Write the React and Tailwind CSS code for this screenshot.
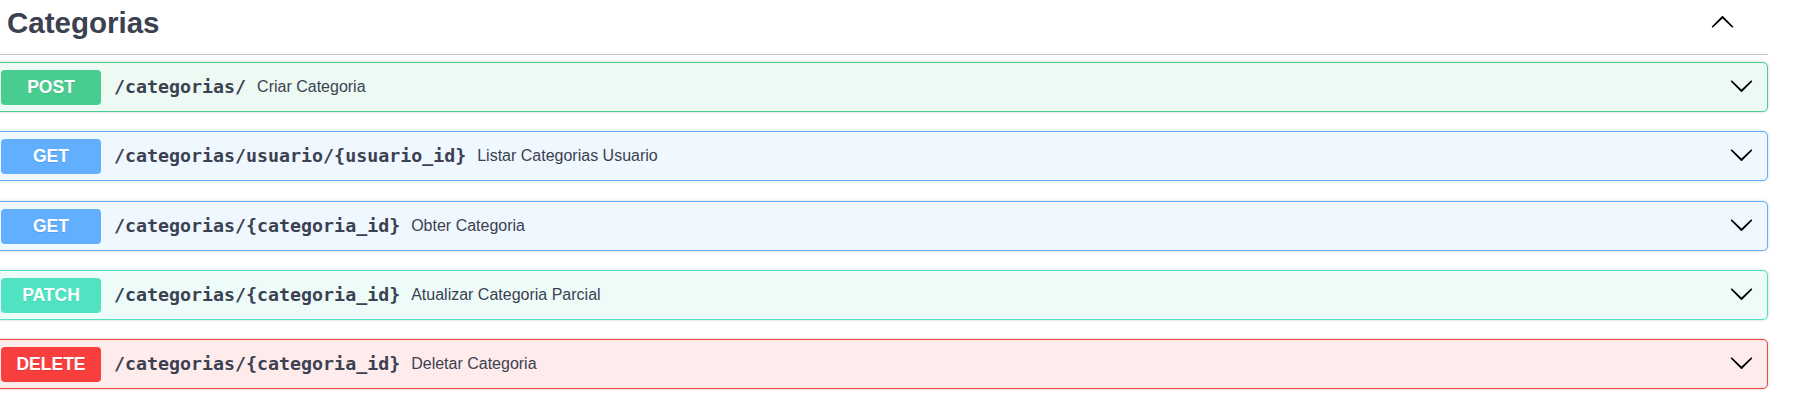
const OPS = [
  { method: "POST", path: "/categorias/", summary: "Criar Categoria" },
  { method: "GET", path: "/categorias/usuario/{usuario_id}", summary: "Listar Categorias Usuario" },
  { method: "GET", path: "/categorias/{categoria_id}", summary: "Obter Categoria" },
  { method: "PATCH", path: "/categorias/{categoria_id}", summary: "Atualizar Categoria Parcial" },
  { method: "DELETE", path: "/categorias/{categoria_id}", summary: "Deletar Categoria" },
];

const METHOD_STYLE = {
  POST: { block: "bg-[#edfaf4] border-[#49cc90]", badge: "bg-[#49cc90]" },
  GET: { block: "bg-[#eff7ff] border-[#61affe]", badge: "bg-[#61affe]" },
  PATCH: { block: "bg-[#edfcf9] border-[#50e3c2]", badge: "bg-[#50e3c2]" },
  DELETE: { block: "bg-[#feebeb] border-[#f93e3e]", badge: "bg-[#f93e3e]" },
};

function Chevron({ up }) {
  return (
    <svg
      width="25"
      height="25"
      viewBox="0 0 20 20"
      className={up ? "rotate-180" : ""}
      aria-hidden="true"
    >
      <path
        fill="#000"
        d="M17.418 6.109c.272-.268.709-.268.979 0s.271.701 0 .969l-7.908 7.83c-.27.268-.707.268-.979 0l-7.908-7.83c-.27-.268-.27-.701 0-.969.271-.268.709-.268.979 0L10 13.25l7.418-7.141z"
      />
    </svg>
  );
}

function Operation({ op, wide }) {
  const s = METHOD_STYLE[op.method];
  return (
    <div
      className={`-ml-[6px] h-[50px] flex items-center border rounded-[5px] pl-[6px] shadow-[0_0_3px_rgba(0,0,0,0.19)] ${wide ? "mb-[20px]" : "mb-[19px]"} ${s.block}`}
    >
      <span
        className={`w-[100px] h-[35px] rounded-[4px] flex items-center justify-center text-white font-bold text-[17.5px] [text-shadow:0_1px_0_rgba(0,0,0,0.1)] ${s.badge}`}
      >
        {op.method}
      </span>
      <span className="ml-[13px] font-['DejaVu_Sans_Mono',monospace] font-bold text-[18.3px] text-[#3b4151]">
        {op.path}
      </span>
      <span className="ml-[11px] text-[16px] text-[#3b4151]">{op.summary}</span>
      <span className="ml-auto mr-[13px] self-start mt-[10px]">
        <Chevron />
      </span>
    </div>
  );
}

export default function App() {
  return (
    <div className="w-[1803px] h-[406px] overflow-hidden bg-white font-['Liberation_Sans',Arial,sans-serif]">
      <div className="w-[1768px]">
        <div className="h-[55px] flex items-start border-b border-[#c4c6cb]">
          <h2 className="ml-[7px] mt-[8px] leading-none font-bold text-[29.5px] text-[#3b4151]">
            Categorias
          </h2>
          <span className="ml-auto mr-[33px] mt-[10px]">
            <Chevron up />
          </span>
        </div>
        <div className="pt-[7px]">
          {OPS.map((op, i) => (
            <Operation key={i} op={op} wide={i === 1} />
          ))}
        </div>
      </div>
    </div>
  );
}
